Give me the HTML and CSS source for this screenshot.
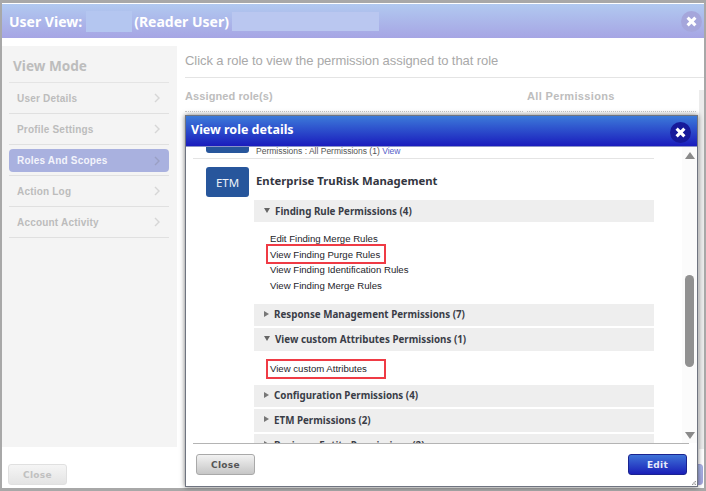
FILE: index.html
```html
<!DOCTYPE html>
<html lang="en">
<head>
<meta charset="utf-8">
<title>User View</title>
<link rel="stylesheet" href="styles.css">
</head>
<body>
<div class="window">
  <header class="win-head">
    <span class="win-title">User View:</span>
    <span class="blur blur-name"></span>
    <span class="win-title">(Reader User)</span>
    <span class="blur blur-mail"></span>
    <span class="win-close"><svg viewBox="0 0 10 10" class="x"><path d="M2 2l6 6M8 2l-6 6"/></svg></span>
  </header>
  <div class="win-body">
    <aside class="side">
      <h2 class="side-title">View Mode</h2>
      <ul class="nav">
        <li class="nav-item"><span>User Details</span><svg class="chev" viewBox="0 0 6 10"><path d="M1 1l4 4-4 4"/></svg></li>
        <li class="nav-item"><span>Profile Settings</span><svg class="chev" viewBox="0 0 6 10"><path d="M1 1l4 4-4 4"/></svg></li>
        <li class="nav-item active"><span>Roles And Scopes</span><svg class="chev" viewBox="0 0 6 10"><path d="M1 1l4 4-4 4"/></svg></li>
        <li class="nav-item"><span>Action Log</span><svg class="chev" viewBox="0 0 6 10"><path d="M1 1l4 4-4 4"/></svg></li>
        <li class="nav-item"><span>Account Activity</span><svg class="chev" viewBox="0 0 6 10"><path d="M1 1l4 4-4 4"/></svg></li>
      </ul>
    </aside>
    <main class="main">
      <p class="hint">Click a role to view the permission assigned to that role</p>
      <div class="cols">
        <div class="col col-a">Assigned role(s)</div>
        <div class="col col-b">All Permissions</div>
      </div>
      <i class="main-track"></i>
    </main>
  </div>
  <footer class="win-foot">
    <button class="btn btn-off">Close</button>
    <button class="btn btn-peek">Edit</button>
  </footer>
</div>

<section class="modal">
  <header class="modal-head">
    <h1 class="modal-title">View role details</h1>
    <span class="modal-close"><svg viewBox="0 0 10 10" class="x"><path d="M2 2l6 6M8 2l-6 6"/></svg></span>
  </header>
  <div class="modal-body">
    <div class="scroll-content">
      <div class="prev-role">
        <span class="badge badge-cut"></span>
        <span class="prev-text">Permissions : All Permissions (1) <a class="link">View</a></span>
      </div>
      <div class="role">
        <span class="badge">ETM</span>
        <strong class="role-name">Enterprise TruRisk Management</strong>
      </div>
      <div class="group g-first"><i class="tri down"></i>Finding Rule Permissions (4)</div>
      <ul class="perms">
        <li class="perm">Edit Finding Merge Rules</li>
        <li class="perm">View Finding Purge Rules</li>
        <li class="perm">View Finding Identification Rules</li>
        <li class="perm">View Finding Merge Rules</li>
      </ul>
      <div class="group g-s"><i class="tri right"></i>Response Management Permissions (7)</div>
      <div class="group g-m"><i class="tri down"></i>View custom Attributes Permissions (1)</div>
      <ul class="perms perms-one">
        <li class="perm">View custom Attributes</li>
      </ul>
      <div class="group g-s"><i class="tri right"></i>Configuration Permissions (4)</div>
      <div class="group g-m"><i class="tri right"></i>ETM Permissions (2)</div>
      <div class="group g-m"><i class="tri right"></i>Business Entity Permissions (2)</div>
    </div>
    <div class="scrollbar">
      <i class="sb-up"></i>
      <i class="sb-thumb"></i>
      <i class="sb-down"></i>
    </div>
    <span class="mark mark-1"></span>
    <span class="mark mark-2"></span>
  </div>
  <footer class="modal-foot">
    <button class="btn btn-close">Close</button>
    <button class="btn btn-edit">Edit</button>
    <svg class="grip" viewBox="0 0 6 6"><path d="M4 0h2v2H4zM2 2h2v2H2zM4 4h2v2H4zM0 4h2v2H0z"/></svg>
  </footer>
</section>
</body>
</html>
```

FILE: styles.css
```css
* { box-sizing: border-box; }
html, body { margin: 0; height: 100%; }
body {
  width: 706px;
  height: 491px;
  overflow: hidden;
  background: #fff;
  font-family: "Liberation Sans", Arial, sans-serif;
  position: relative;
}
ul { list-style: none; margin: 0; padding: 0; }
.window {
  width: 706px;
  height: 491px;
  border: 2px solid #a8a8a8;
  border-top-width: 3px;
  border-bottom-width: 3px;
  display: flex;
  flex-direction: column;
  background: #fff;
}
.win-head {
  height: 34px;
  margin-top: 1px;
  flex: none;
  background: linear-gradient(#b1c9f0, #a6a5e4);
  display: flex;
  align-items: center;
  padding: 0 2px 0 7px;
  font: bold 14px "Noto Sans", Tahoma, sans-serif;
  color: #fff;
}
.win-title { white-space: nowrap; }
.blur { display: block; height: 19px; background: #b9c6ef; }
.blur-name { width: 46px; height: 21px; margin: 0 2px 0 4px; background: #b4c6f0; }
.blur-mail { width: 147px; margin-left: 3px; background: #bac7f0; }
.win-close {
  margin-left: auto;
  width: 21px; height: 21px;
  border-radius: 50%;
  background: #a5a6db;
  display: flex; align-items: center; justify-content: center;
}
.x { width: 13px; height: 13px; fill: none; stroke: #fff; stroke-width: 2.4; }
.win-body { flex: 1; display: flex; min-height: 0; padding-top: 8px; }
.side {
  width: 175px;
  height: 401px;
  background: #f4f4f4;
  padding: 0 8px 0 7px;
  flex: none;
}
.side-title {
  margin: 0;
  padding: 11px 0 0 4px;
  height: 36px;
  font: bold 13.6px "Noto Sans", Tahoma, sans-serif;
  line-height: 17px;
  color: #bdbdbd;
}
.nav { border-top: 1px solid #e4e4e4; }
.nav-item {
  height: 31px;
  border-bottom: 1px solid #e0e0e0;
  display: flex; align-items: center; justify-content: space-between;
  padding: 0 9px 0 8px;
  font: bold 10px "Liberation Sans", Arial, sans-serif;
  letter-spacing: .2px;
  color: #bcbcbc;
}
.nav-item.active {
  background: #a9b1df;
  border: 0;
  border-radius: 4px;
  height: 23px;
  margin: 4px 0 3px;
  color: #f3f4fb;
}
.nav-item.active + .nav-item { height: 32px; border-top: 1px solid #e0e0e0; }
.chev { width: 6px; height: 10px; fill: none; stroke: #d6d6d6; stroke-width: 1.4; }
.active .chev { stroke: #9a9fc4; }
.main { flex: 1; padding: 0 0 0 8px; min-width: 0; position: relative; }
.main-track { position: absolute; right: 0; top: 44px; bottom: 0; width: 5px; background: #ececec; }
.hint {
  margin: 0;
  height: 32px;
  padding-top: 6px;
  font-size: 13px;
  letter-spacing: -.07px;
  line-height: 17px;
  color: #a9a9a9;
  border-bottom: 1px solid #e4e4e4;
}
.cols { display: flex; gap: 4px; padding-top: 10px; padding-right: 8px; }
.col {
  height: 24px;
  border-bottom: 1px dotted #c8c8c8;
  font: bold 11px "Liberation Sans", Arial, sans-serif;
  letter-spacing: .35px;
  line-height: 16px;
  color: #bdbdbd;
}
.col-a { width: 338px; letter-spacing: .1px; }
.col-b { flex: 1; }
.win-foot { height: 39px; flex: none; padding: 15px 1px 0 6px; display: flex; justify-content: space-between; }
.btn {
  width: 59px; height: 21px;
  border-radius: 3px;
  font: bold 9px "DejaVu Sans", Verdana, sans-serif;
  padding: 0;
  letter-spacing: .3px;
}
.btn-off { background: linear-gradient(#f5f5f5, #e4e4e4); border: 1px solid #e0e0e0; color: #c0c0c0; }
.btn-peek { background: linear-gradient(#a9b9ea, #a5a6de); border: 1px solid #a5a6de; color: #e6eafa; }

.modal {
  position: absolute;
  left: 185px; top: 115px;
  width: 513px; height: 372px;
  background: #fff;
  border: 1px solid #6f7480;
  box-shadow: 0 0 5px rgba(0,0,0,.55);
  display: flex;
  flex-direction: column;
}
.modal-head {
  height: 31px; flex: none;
  background: linear-gradient(#3c7ad9, #1a1cbd);
  border-bottom: 1px solid #8a93c8;
  display: flex; align-items: center; justify-content: space-between;
  padding: 0 6px 4px 5px;
}
.modal-title { margin: 0; font: bold 12.5px "Noto Sans", Tahoma, sans-serif; color: #fff; }
.modal-close {
  width: 21px; height: 21px;
  border-radius: 50%;
  background: #16199a;
  display: flex; align-items: center; justify-content: center;
  position: relative; top: 3px;
}
.modal-body { position: relative; height: 296px; flex: none; overflow: hidden; margin-left: 7px; }
.scroll-content { width: 461px; height: 296px; overflow: hidden; }
.prev-role {
  height: 12px;
  border-bottom: 1px solid #e4e4e4;
  display: flex;
  align-items: flex-start;
  padding-left: 13px;
}
.badge {
  width: 43px; height: 30px; flex: none;
  background: #27569c;
  border-radius: 3px;
  color: #eef2f8;
  font: 11.5px "Noto Sans", Verdana, sans-serif;
  display: flex; align-items: center; justify-content: center;
}
.badge-cut { height: 6px; border-radius: 0 0 3px 3px; }
.prev-text { font-size: 8.5px; line-height: 9px; margin-left: 7px; color: #555; }
.link { color: #5560c8; }
.role { display: flex; align-items: center; padding: 8px 0 0 13px; height: 38px; }
.role-name { margin-left: 7px; font: bold 11.3px "Noto Sans", Tahoma, sans-serif; color: #33363f; position: relative; top: -2px; white-space: nowrap; }
.group {
  margin-left: 61px;
  width: 400px;
  background: #eee;
  font: bold 9.8px "Noto Sans", Tahoma, sans-serif;
  color: #3a3d47;
  display: flex; align-items: center;
  padding-left: 10px;
  white-space: nowrap;
}
.g-first { height: 22px; margin-top: 3px; }
.g-s { height: 22px; }
.g-m { height: 23px; margin-top: 2px; }
.tri { width: 0; height: 0; margin-right: 5px; flex: none; position: relative; top: -1px; }
.tri.down { border: 3px solid transparent; border-top: 5px solid #666; border-bottom: 0; }
.tri.right { border: 3px solid transparent; border-left: 5px solid #777; border-right: 0; }
.perms { padding: 9px 0 10.2px 77px; }
.perms-one { padding: 10px 0 7px 77px; }
.perm { height: 15.7px; font-size: 9.6px; line-height: 15.7px; color: #1d1d2a; }
.perms-one .perm { height: 17px; }
.mark { position: absolute; border: 2px solid #ef3b45; pointer-events: none; }
.mark-1 { left: 73px; top: 97px; width: 120px; height: 20px; }
.mark-2 { left: 73px; top: 212px; width: 120px; height: 20px; }
.scrollbar { position: absolute; right: 0; top: 0; bottom: 0; width: 15px; background: #fbfbfb; }
.sb-up, .sb-down { position: absolute; left: 3px; width: 0; height: 0; border: 5px solid transparent; }
.sb-up { top: 5px; border-top: 0; border-bottom: 7px solid #8a8a8a; }
.sb-down { bottom: 4px; border-bottom: 0; border-top: 7px solid #8a8a8a; }
.sb-thumb { position: absolute; left: 3px; top: 128px; width: 9px; height: 92px; background: #919191; border-radius: 5px; }
.modal-foot { flex: 1; display: flex; justify-content: space-between; padding: 11px 10px 0 10px; position: relative; }
.modal-foot::before { content: ""; position: absolute; left: 7px; right: 8px; top: 0; border-top: 1px solid #b4b4b4; }
.grip { position: absolute; right: 1px; bottom: 1px; width: 4px; height: 4px; fill: #9a9a9a; }
.btn-close { background: linear-gradient(#f2f2f2, #c6c6c6); border: 1px solid #a9a9a9; color: #555; }
.btn-edit { background: linear-gradient(#3e73d8, #1a1fb8); border: 1px solid #1a2390; color: #e6eafa; }
```
